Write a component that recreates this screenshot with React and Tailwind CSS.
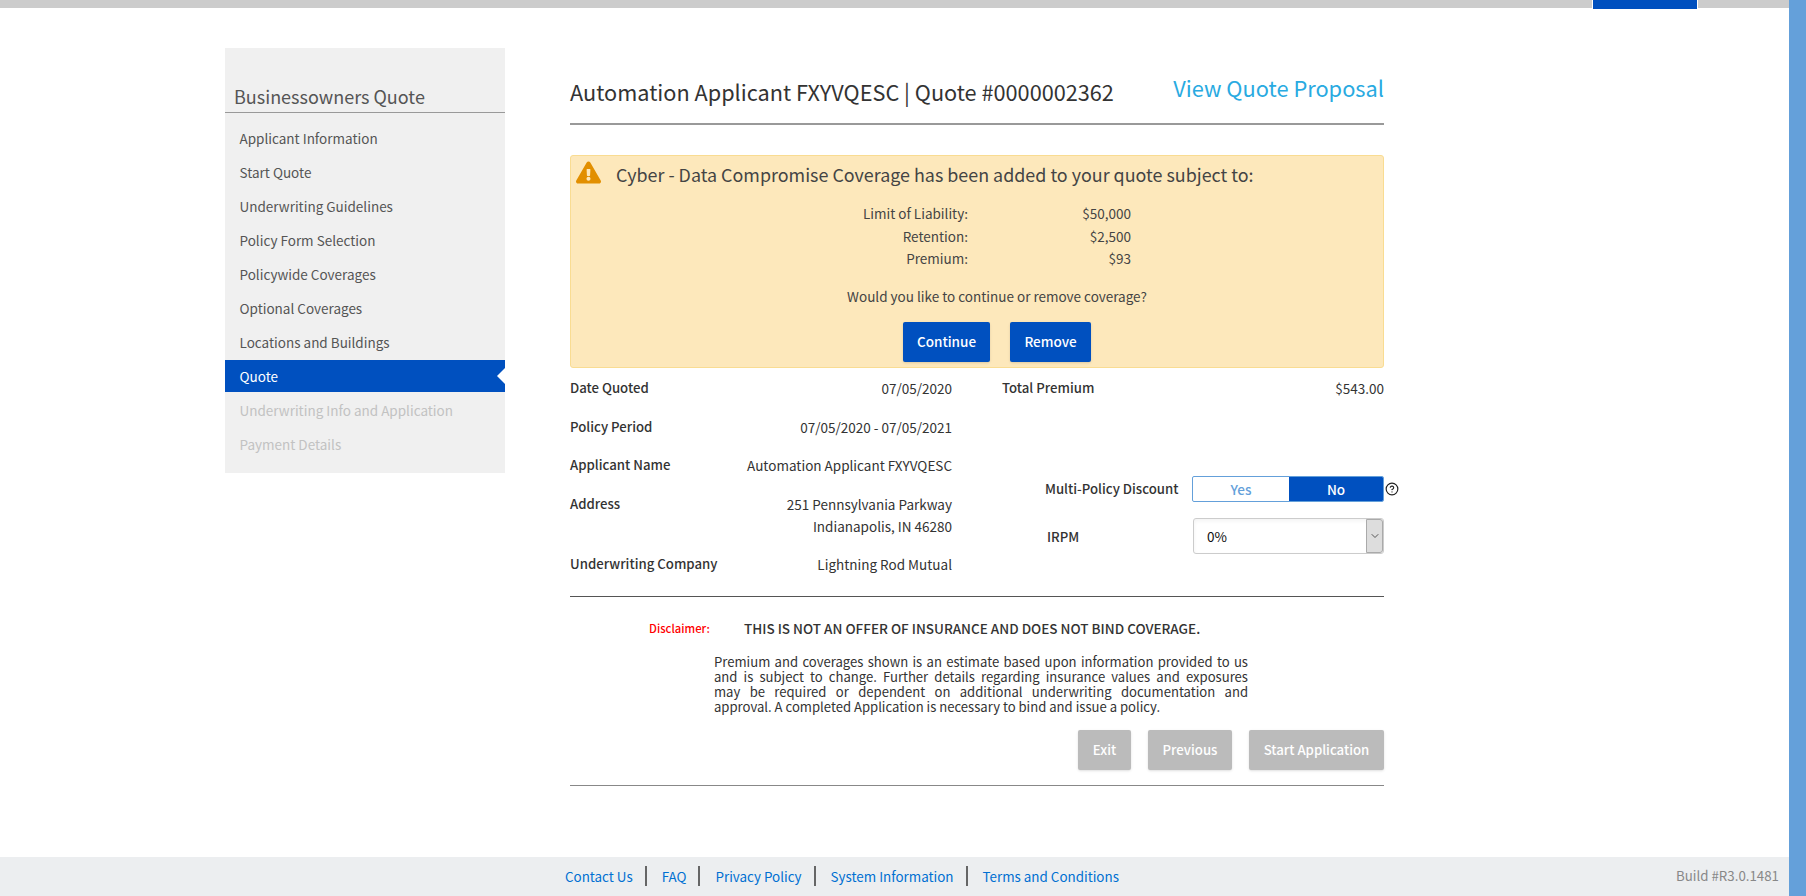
import React from 'react';
import { ChevronDown, CircleHelp } from 'lucide-react';
import { FaExclamationTriangle } from 'react-icons/fa';

const FONT = "font-['Noto_Sans_CJK_SC','Noto_Sans',sans-serif]";

const navItems = [
  { label: 'Applicant Information' },
  { label: 'Start Quote' },
  { label: 'Underwriting Guidelines' },
  { label: 'Policy Form Selection' },
  { label: 'Policywide Coverages' },
  { label: 'Optional Coverages' },
  { label: 'Locations and Buildings' },
  { label: 'Quote', active: true },
  { label: 'Underwriting Info and Application', disabled: true },
  { label: 'Payment Details', disabled: true },
];

const leftRows = [
  { label: 'Date Quoted', value: ['07/05/2020'] },
  { label: 'Policy Period', value: ['07/05/2020 - 07/05/2021'] },
  { label: 'Applicant Name', value: ['Automation Applicant FXYVQESC'] },
  { label: 'Address', value: ['251 Pennsylvania Parkway', 'Indianapolis, IN 46280'] },
  { label: 'Underwriting Company', value: ['Lightning Rod Mutual'] },
];

const disclaimerLines = [
  'Premium and coverages shown is an estimate based upon information provided to us',
  'and is subject to change. Further details regarding insurance values and exposures',
  'may be required or dependent on additional underwriting documentation and',
];

const footerLinks = ['Contact Us', 'FAQ', 'Privacy Policy', 'System Information', 'Terms and Conditions'];

function Sidebar() {
  return (
    <aside className="w-[280px] h-[425px] mt-[40px] bg-[#f0f0f0] shrink-0">
      <div className="h-[65px] pl-[9px] pt-[34px] border-b border-[#999] text-[18px] leading-[28px] text-[#555]">
        Businessowners Quote
      </div>
      <ul className="pt-[8px]">
        {navItems.map((item) => (
          <li
            key={item.label}
            className={`relative pl-[14.5px] text-[13.5px] ${
              item.active
                ? 'h-[32px] my-px leading-[32px] bg-[#0050bf] text-white'
                : `h-[34px] leading-[34px] ${item.disabled ? 'text-[#c2c2c2]' : 'text-[#555]'}`
            }`}
          >
            {item.label}
            {item.active && (
              <span className="absolute right-0 top-[8px] border-y-[8px] border-r-[8px] border-y-transparent border-r-white" />
            )}
          </li>
        ))}
      </ul>
    </aside>
  );
}

function CyberAlert() {
  return (
    <div className="relative h-[213px] mt-[30px] bg-[#fde8bb] border border-[#f9dc92] rounded-[3px] text-[#444]">
      <FaExclamationTriangle className="absolute left-[5px] top-[4px] text-[#e28f00]" size={25} />
      <p className="pl-[45px] pt-[4px] text-[17.9px] leading-[28px]">
        Cyber - Data Compromise Coverage has been added to your quote subject to:
      </p>
      <div className="mt-[14px] text-[13.5px] leading-[22.5px]">
        {[
          ['Limit of Liability:', '$50,000'],
          ['Retention:', '$2,500'],
          ['Premium:', '$93'],
        ].map(([k, v]) => (
          <div key={k} className="flex">
            <span className="w-[397px] text-right">{k}</span>
            <span className="w-[163px] text-right">{v}</span>
          </div>
        ))}
      </div>
      <p className="mt-[15px] pl-[40px] text-center text-[13.5px] leading-[22px]">Would you like to continue or remove coverage?</p>
      <div className="flex justify-center gap-[20px] mt-[15px] pl-[40px]">
        <button className="w-[87px] h-[40px] bg-[#0050bf] text-white text-[13.5px] font-medium rounded-[2px] shadow-sm">Continue</button>
        <button className="w-[81px] h-[40px] bg-[#0050bf] text-white text-[13.5px] font-medium rounded-[2px] shadow-sm">Remove</button>
      </div>
    </div>
  );
}

function QuoteDetails() {
  return (
    <div className="flex justify-between text-[13.5px] leading-[22px] text-[#333]">
      <div className="w-[382px]">
        {leftRows.map((row) => (
          <div key={row.label} className="flex justify-between mb-[16.5px]">
            <span className="font-medium text-[13.2px]">{row.label}</span>
            <span className="text-right">
              {row.value.map((line) => (
                <div key={line}>{line}</div>
              ))}
            </span>
          </div>
        ))}
      </div>
      <div className="w-[382px]">
        <div className="flex justify-between">
          <span className="font-medium text-[13.2px]">Total Premium</span>
          <span>$543.00</span>
        </div>
        <div className="flex items-center mt-[77px] pl-[43px]">
          <span className="w-[147px] shrink-0 font-medium text-[13.2px]">Multi-Policy Discount</span>
          <div className="flex w-[192px] h-[26px] shrink-0 border border-[#64a0da] rounded-[2px] bg-white text-center leading-[24px] font-medium">
            <span className="w-[96px] text-[#64a0da]">Yes</span>
            <span className="flex-1 bg-[#0050bf] text-white rounded-r-[1px]">No</span>
          </div>
          <CircleHelp size={14} strokeWidth={2} className="ml-[1px] shrink-0 text-[#222]" />
        </div>
        <div className="flex items-center mt-[16px] pl-[45px]">
          <span className="w-[146px] pt-[1px] shrink-0 font-medium text-[13.2px]">IRPM</span>
          <div className="flex w-[191px] h-[36px] shrink-0 border border-[#ccc] rounded-[3px] bg-white shadow-inner">
            <span className="flex-1 pl-[13px] leading-[34px] text-[#111]">0%</span>
            <span className="flex items-center justify-center w-[17px] bg-[#ddd] border border-[#aaa] rounded-r-[3px]">
              <ChevronDown size={12} className="text-[#555]" />
            </span>
          </div>
        </div>
      </div>
    </div>
  );
}

function Disclaimer() {
  return (
    <div className="mt-[4px] border-t border-[#555] pt-[21px]">
      <div className="flex items-center leading-[20px] text-[13.5px] text-[#333]">
        <span className="w-[95px] ml-[79px] text-[11.3px] text-[#f00] font-medium">Disclaimer:</span>
        <span className="font-medium">THIS IS NOT AN OFFER OF INSURANCE AND DOES NOT BIND COVERAGE.</span>
      </div>
      <div className="w-[534px] ml-[144px] mt-[16px] text-[13.1px] leading-[15px] text-[#333]">
        {disclaimerLines.map((line) => (
          <p key={line} className="[text-align-last:justify]">{line}</p>
        ))}
        <p>approval. A completed Application is necessary to bind and issue a policy.</p>
      </div>
      <div className="flex justify-end gap-[17px] mt-[16px] text-[13.2px] font-medium text-white">
        <button className="w-[53px] h-[40px] bg-[#bbb] rounded-[2px] shadow-sm">Exit</button>
        <button className="w-[84px] h-[40px] bg-[#bbb] rounded-[2px] shadow-sm">Previous</button>
        <button className="w-[135px] h-[40px] bg-[#bbb] rounded-[2px] shadow-sm">Start Application</button>
      </div>
      <div className="mt-[15px] border-t border-[#888]" />
    </div>
  );
}

export default function App() {
  return (
    <div className={`${FONT} flex h-[896px] overflow-hidden bg-white`}>
      <div className="flex flex-col flex-1 min-w-0">
        {/* top strip with the active tab */}
        <div className="flex justify-end h-[8px] bg-[#ccc]">
          <div className="w-[104px] h-[9px] mr-[92px] bg-[#0050bf] outline outline-white z-10" />
        </div>

        <div className="flex flex-1 pl-[225px]">
          <Sidebar />
          <main className="w-[814px] ml-[65px]">
            <div className="flex justify-between items-end h-[117px] pb-[15px] border-b-2 border-[#999]">
              <h1 className="text-[21.7px] leading-[32px] text-[#333]">Automation Applicant FXYVQESC | Quote #0000002362</h1>
              <a className="text-[21.8px] leading-[34px] pb-[3px] text-[#29aae1]">View Quote Proposal</a>
            </div>
            <CyberAlert />
            <div className="mt-[9px]">
              <QuoteDetails />
            </div>
            <Disclaimer />
          </main>
        </div>

        <footer className="relative flex items-center h-[39px] pl-[565px] pb-[2px] bg-[#eceef0] text-[13.4px] text-[#0070d2]">
          {footerLinks.map((link, i) => (
            <a key={link} className={`leading-[20px] ${i > 0 ? 'pl-[15px] ml-[12px] border-l-2 border-[#666]' : ''}`}>{link}</a>
          ))}
          <span className="absolute right-[10px] text-[13.3px] text-[#888]">Build #R3.0.1481</span>
        </footer>
      </div>
      <div className="w-[17px] bg-[#64a0da] shrink-0" />
    </div>
  );
}
